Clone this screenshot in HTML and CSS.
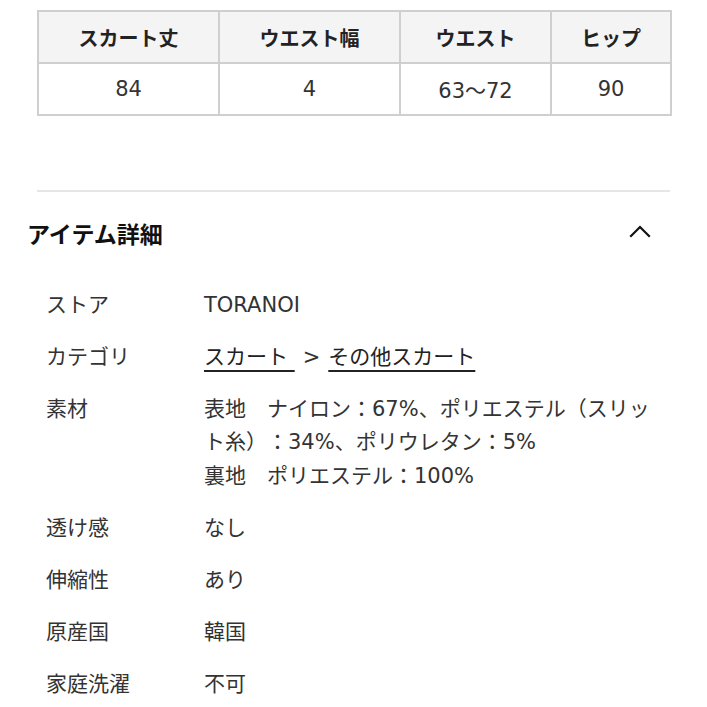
FILE: index.html
```html
<!DOCTYPE html>
<html lang="ja">
<head>
<meta charset="utf-8">
<link rel="stylesheet" href="styles.css">
</head>
<body>
<div class="page">
  <table class="size-table">
    <colgroup>
      <col class="c1"><col class="c2"><col class="c3"><col class="c4">
    </colgroup>
    <thead>
      <tr><th>スカート丈</th><th>ウエスト幅</th><th>ウエスト</th><th>ヒップ</th></tr>
    </thead>
    <tbody>
      <tr><td>84</td><td>4</td><td>63〜72</td><td>90</td></tr>
    </tbody>
  </table>

  <hr class="divider">

  <div class="section-head">
    <h2 class="section-title">アイテム詳細</h2>
    <svg class="chevron" width="24" height="14" viewBox="0 0 24 14" aria-hidden="true">
      <polyline points="3,12 12,3 21,12" fill="none" stroke="#111" stroke-width="2.2" stroke-linecap="square"/>
    </svg>
  </div>

  <dl class="details">
    <dt>ストア</dt><dd>TORANOI</dd>
    <dt>カテゴリ</dt><dd><a class="link" href="#">スカート </a><span class="sep">&gt;</span><a class="link" href="#">その他スカート</a></dd>
    <dt>素材</dt><dd class="material">表地　ナイロン：67%、ポリエステル（スリット糸）：34%、ポリウレタン：5%<br>裏地　ポリエステル：100%</dd>
    <dt>透け感</dt><dd>なし</dd>
    <dt>伸縮性</dt><dd>あり</dd>
    <dt>原産国</dt><dd>韓国</dd>
    <dt>家庭洗濯</dt><dd>不可</dd>
  </dl>
</div>
</body>
</html>
```

FILE: styles.css
```css
* { box-sizing: border-box; }
html, body { margin: 0; padding: 0; background: #fff; }
body {
  font-family: "DejaVu Sans", "Noto Sans CJK JP", "Noto Sans", sans-serif;
  color: #333;
  text-spacing-trim: space-all;
}
.page {
  display: flex;
  flex-direction: column;
  padding: 10px 37px 0 37px;
}
.size-table {
  width: 633px;
  border-collapse: collapse;
  table-layout: fixed;
  border: 2px solid #cfcfcf;
}
.c1 { width: 181px; }
.c2 { width: 181px; }
.c3 { width: 151px; }
.c4 { width: 120px; }
.size-table th, .size-table td {
  border: 2px solid #cfcfcf;
  text-align: center;
  font-size: 20px;
  padding: 0;
}
.size-table th {
  background: #f4f4f4;
  font-family: "Noto Sans CJK JP", sans-serif;
  font-weight: 700;
  color: #222;
  height: 52px;
}
.size-table td {
  height: 52px;
  font-size: 21px;
  color: #333;
  font-weight: 400;
}
.divider {
  margin: 74px 0 0 0;
  border: 0;
  border-top: 2px solid #e6e6e6;
  height: 0;
}
.section-head {
  display: flex;
  align-items: center;
  justify-content: space-between;
  margin: 25px 18px 0 -10px;
  height: 32px;
}
.section-title {
  margin: 0;
  font-family: "Noto Sans CJK JP", sans-serif;
  font-size: 23px;
  font-weight: 700;
  color: #111;
  line-height: 32px;
}
.chevron { display: block; margin-top: -4px; }
.details {
  display: grid;
  grid-template-columns: 158px 1fr;
  row-gap: 18.5px;
  margin: 39.5px 0 0 9px;
  font-size: 21px;
  line-height: 33.5px;
  color: #333;
}
.details dt, .details dd { margin: 0; }
.link {
  color: #222;
  text-decoration: underline;
  text-decoration-thickness: 2px;
  text-underline-offset: 6px;
  white-space: pre;
}
.sep { margin: 0 8px 0 8px; color: #333; }
```
